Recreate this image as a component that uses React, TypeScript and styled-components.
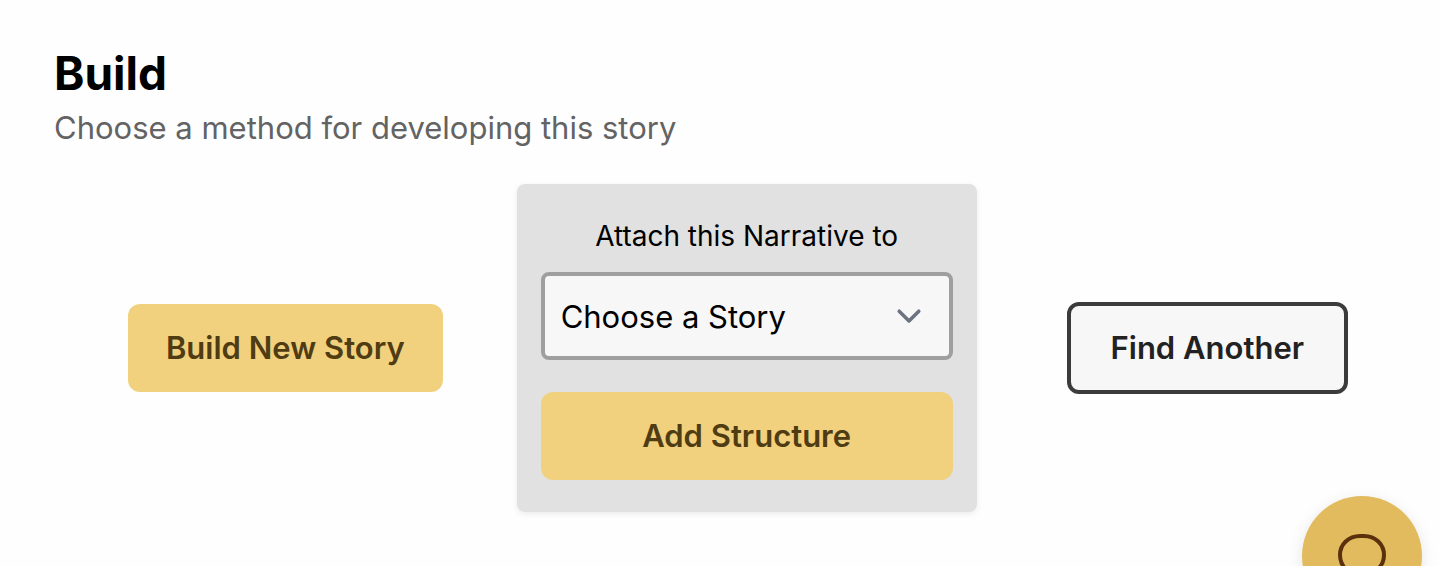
import React from "react";
import styled, { createGlobalStyle } from "styled-components";

const GlobalStyle = createGlobalStyle`
  *, *::before, *::after { box-sizing: border-box; }
  body {
    margin: 0;
    background: #fefefe;
    color: #000;
    font-family: Inter, "Liberation Sans", sans-serif;
    overflow-x: hidden;
  }
  button, select { font-family: inherit; cursor: pointer; }
`;

const Page = styled.main`
  padding: 44px 18px 54px 54px;
`;

const Title = styled.h1`
  margin: 0;
  font-size: 46px;
  line-height: 58px;
  font-weight: 700;
`;

const Subtitle = styled.p`
  margin: 0;
  font-size: 31px;
  line-height: 52px;
  color: #636363;
`;

const Methods = styled.section`
  display: flex;
  align-items: center;
  justify-content: space-evenly;
  margin-top: 30px;
`;

const Button = styled.button<{ $outlined?: boolean }>`
  padding: ${(p) => (p.$outlined ? "18px 40px" : "20px 38px")};
  border: ${(p) => (p.$outlined ? "4px solid #3b3b3b" : "0")};
  border-radius: 12px;
  margin-left: ${(p) => (p.$outlined ? 16 : 0)}px;
  background: ${(p) => (p.$outlined ? "#f7f7f7" : "#f1d17e")};
  color: ${(p) => (p.$outlined ? "#222" : "#4f3c12")};
  font-size: 31px;
  line-height: 48px;
  font-weight: 600;
  white-space: nowrap;
`;

const Card = styled.form`
  display: flex;
  flex-direction: column;
  width: 460px;
  padding: 32px 24px;
  border-radius: 8px;
  background: #e1e1e1;
  box-shadow: 0 2px 6px rgba(0, 0, 0, 0.08);
`;

const Label = styled.label`
  margin-bottom: 16px;
  font-size: 28px;
  line-height: 40px;
  text-align: center;
`;

const SelectField = styled.div`
  display: grid;
  align-items: center;
  margin-bottom: 32px;

  > * { grid-area: 1 / 1; }
`;

const Select = styled.select`
  width: 100%;
  height: 88px;
  padding: 0 80px 0 16px;
  border: 4px solid #9f9f9f;
  border-radius: 8px;
  appearance: none;
  background: #f7f7f7;
  color: #000;
  font-size: 31px;
`;

const Chevron = styled.svg`
  justify-self: end;
  width: 40px;
  height: 40px;
  margin-right: 24px;
  pointer-events: none;
`;

const ChatButton = styled.button`
  position: fixed;
  right: 18px;
  bottom: -50px;
  display: grid;
  place-items: center;
  width: 120px;
  height: 120px;
  padding: 0;
  border: 0;
  border-radius: 50%;
  background: #e1bb5e;
  color: #5b300d;
  box-shadow: 0 4px 16px rgba(0, 0, 0, 0.1);
`;

export default function App() {
  return (
    <>
      <GlobalStyle />
      <Page>
        <Title>Build</Title>
        <Subtitle>Choose a method for developing this story</Subtitle>
        <Methods>
          <Button type="button">Build New Story</Button>
          <Card>
            <Label htmlFor="story">Attach this Narrative to</Label>
            <SelectField>
              <Select id="story">
                <option>Choose a Story</option>
              </Select>
              <Chevron viewBox="0 0 20 20" fill="none" aria-hidden="true">
                <path
                  d="M5.1 7.6l4.9 4.9 4.9-4.9"
                  stroke="#6b7280"
                  strokeWidth="1.75"
                  strokeLinecap="round"
                  strokeLinejoin="round"
                />
              </Chevron>
            </SelectField>
            <Button type="button">Add Structure</Button>
          </Card>
          <Button type="button" $outlined>
            Find Another
          </Button>
        </Methods>
      </Page>
      <ChatButton type="button" aria-label="Open chat">
        <svg width="56" height="56" viewBox="0 0 56 56" fill="none" aria-hidden="true">
          <path
            d="M26 8h4c11.500 0 20 8.500 20 19S42 46 31 46v7C20 49 6 41 6 27 6 16.500 14.500 8 26 8z"
            stroke="currentColor"
            strokeWidth="4"
            strokeLinejoin="round"
          />
        </svg>
      </ChatButton>
    </>
  );
}
